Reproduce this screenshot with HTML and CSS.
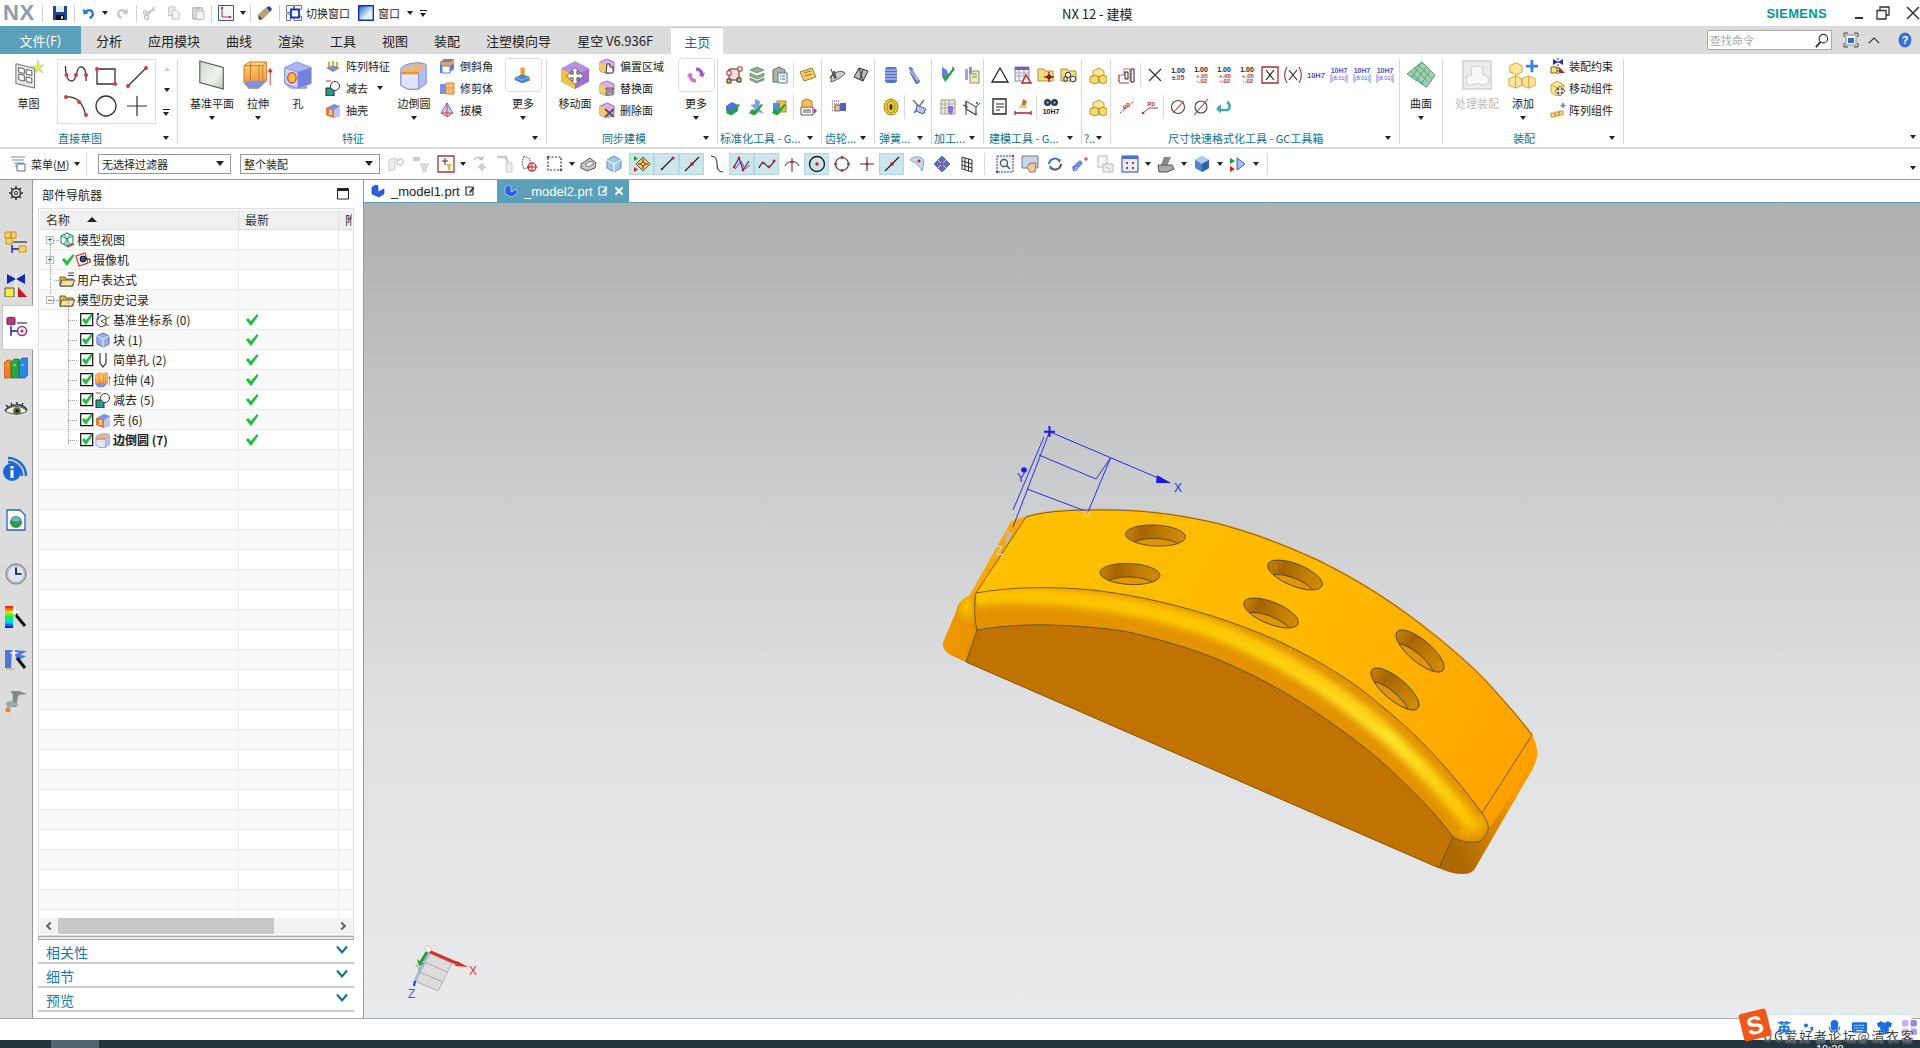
FILE: index.html
```html
<!DOCTYPE html>
<html lang="zh-CN">
<head>
<meta charset="utf-8">
<title>NX 12 - 建模</title>
<link rel="stylesheet" href="styles.css">
</head>
<body>
<svg class="sprite" xmlns="http://www.w3.org/2000/svg">
<defs>
<linearGradient id="gOr" x1="0" y1="0" x2="0" y2="1"><stop offset="0" stop-color="#ffd77a"/><stop offset="1" stop-color="#e88a2a"/></linearGradient>
<linearGradient id="gBl" x1="0" y1="0" x2="1" y2="1"><stop offset="0" stop-color="#dfe6ff"/><stop offset="1" stop-color="#6f80d8"/></linearGradient>
<linearGradient id="gWin" x1="0" y1="0" x2="1" y2="1"><stop offset="0" stop-color="#1a5fb0"/><stop offset=".6" stop-color="#dfeaf5"/><stop offset="1" stop-color="#fff"/></linearGradient>
<linearGradient id="gPl" x1="0" y1="0" x2="1" y2="1"><stop offset="0" stop-color="#c9d8c9"/><stop offset=".6" stop-color="#eef3ee"/><stop offset="1" stop-color="#b9c9bc"/></linearGradient>
<linearGradient id="gRb" x1="0" y1="0" x2="0" y2="1"><stop offset="0" stop-color="#f00"/><stop offset=".25" stop-color="#fc0"/><stop offset=".5" stop-color="#0f4"/><stop offset=".75" stop-color="#0cf"/><stop offset="1" stop-color="#00c"/></linearGradient>

<symbol id="sv" viewBox="0 0 16 16"><path d="M1 1h14v14H1z" fill="#1c468f"/><path d="M4 1h8v6H4z" fill="#e4ebf6"/><path d="M4 10h8v5H4z" fill="#111"/><path d="M9 11h2v3H9z" fill="#ccc"/></symbol>
<symbol id="un" viewBox="0 0 16 16"><path d="M2 3l1 7 6-2z" fill="#2b74d8"/><path d="M4 8c2-4 8-4 9-1 1 2 0 5-3 7" fill="none" stroke="#2b74d8" stroke-width="2.6"/></symbol>
<symbol id="re" viewBox="0 0 16 16"><path d="M14 3l-1 7-6-2z" fill="#c8c8c8"/><path d="M12 8C10 4 4 4 3 7c-1 2 0 5 3 7" fill="none" stroke="#c8c8c8" stroke-width="2.6"/></symbol>
<symbol id="cut" viewBox="0 0 16 16"><path d="M13 1L5 11M14 4L4 8" stroke="#bbb" stroke-width="1.5" fill="none"/><circle cx="4" cy="13" r="2.4" fill="none" stroke="#bbb" stroke-width="1.4"/><circle cx="2.6" cy="7.5" r="2" fill="none" stroke="#bbb" stroke-width="1.4"/></symbol>
<symbol id="cp" viewBox="0 0 16 16"><path d="M2 1h7v10H2z" fill="#eee" stroke="#bbb"/><path d="M6 5h5l3 3v7H6z" fill="#f5f5f5" stroke="#bbb"/></symbol>
<symbol id="pa" viewBox="0 0 16 16"><path d="M2 2h11v13H2z" fill="#ddd" stroke="#aaa"/><path d="M5 1h5v3H5z" fill="#bbb"/><path d="M6 6h9v9H6z" fill="#f5f5f5" stroke="#bbb"/></symbol>
<symbol id="wc" viewBox="0 0 16 16"><path d="M.5 .5h15v15H.5z" fill="#f2f5fb" stroke="#2a5ab0"/><path d="M4 3v9h8" fill="none" stroke="#c03030"/><circle cx="4" cy="3" r="1.2" fill="#d03030"/><circle cx="12" cy="12" r="1.2" fill="#d03030"/></symbol>
<symbol id="br" viewBox="0 0 16 16"><path d="M1 10l7-7 5 4-7 7z" fill="#b8a070"/><path d="M9 3l3-2 3 3-2 3z" fill="#26418a"/><path d="M1 10l5 4-4 1z" fill="#444"/></symbol>
<symbol id="sw" viewBox="0 0 16 16"><path d="M.5 .5h7v7h-7zM8.5 .5h7v4h-7zM.5 9h4v6.5h-4zM8 11h7.5v4.500H8z" fill="#f5f5f5" stroke="#777"/><path d="M5 4.500h8v8H5z" fill="#fff" stroke="#1030d0" stroke-width="1.800"/></symbol>
<symbol id="wn" viewBox="0 0 16 16"><path d="M.7 .7h14.600v14.600H.7z" fill="url(#gWin)" stroke="#0a30c8" stroke-width="1.400"/></symbol>
<symbol id="mx" viewBox="0 0 12 12"><path d="M.5 .5h11v10.500H.5z" fill="#fff" stroke="#222"/><path d="M.5 2h11" stroke="#222" stroke-width="2"/></symbol>

<symbol id="sk" viewBox="0 0 32 32"><path d="M2 4l20 5v21L2 25z" fill="#e8e8e8" stroke="#666"/><path d="M5 8l6 1.500v5l-6-1.500zM13 10l6 1.500v5l-6-1.500zM5 15l6 1.500v6l-6-1.500zM13 18l6 1.500v5l-6-1.500z" fill="#fff" stroke="#555"/><path d="M26 0l1 6 5-1-4 4 3 5-5-3-4 4 1-6-5-2 6-1z" fill="#f6e640" stroke="#7cc7e8" stroke-width=".6"/></symbol>
<symbol id="gs" viewBox="0 0 26 26"><path d="M2.500 2C2.500 11 4 17 9 17C14 17 12.500 5 17 3C22 2 23.500 8 23 17" fill="none" stroke="#333" stroke-width="1.300"/><circle cx="3.500" cy="11" r="2" fill="#d83a3a"/><circle cx="13" cy="11" r="2" fill="#d83a3a"/><circle cx="23" cy="11" r="2" fill="#d83a3a"/></symbol>
<symbol id="gr" viewBox="0 0 26 26"><path d="M4 5h18v15H4z" fill="none" stroke="#333" stroke-width="1.300"/><circle cx="4" cy="5" r="2" fill="#d83a3a"/><circle cx="22" cy="20" r="2" fill="#d83a3a"/></symbol>
<symbol id="gl" viewBox="0 0 26 26"><path d="M4 22L22 4" stroke="#333" stroke-width="1.200"/><circle cx="4" cy="22" r="2" fill="#d83a3a"/><circle cx="22" cy="4" r="2" fill="#d83a3a"/></symbol>
<symbol id="ga" viewBox="0 0 26 26"><path d="M3 4c10-1 17 6 20 19" fill="none" stroke="#333" stroke-width="1.300"/><circle cx="3" cy="4" r="2" fill="#d83a3a"/><circle cx="16" cy="9" r="2" fill="#d83a3a"/><circle cx="23" cy="22" r="2" fill="#d83a3a"/></symbol>
<symbol id="gc" viewBox="0 0 26 26"><circle cx="13" cy="13" r="10" fill="none" stroke="#333" stroke-width="1.300"/></symbol>
<symbol id="gp" viewBox="0 0 26 26"><path d="M13 3v20M3 13h20" stroke="#333" stroke-width="1.200"/></symbol>

<symbol id="dp" viewBox="0 0 32 32"><path d="M3 1l25 7v23L3 24z" fill="url(#gPl)" stroke="#555" stroke-width="1.200"/></symbol>
<symbol id="ex" viewBox="0 0 32 32"><path d="M1 6l6-4h18v20l-8 8H6l-5-6z" fill="url(#gOr)" stroke="#d87030"/><path d="M8 3v21M17 5v24M1 6h20l4-4M21 6v20" fill="none" stroke="#d87030"/><path d="M1 24l5 6h11l8-8H9z" fill="#7f93e0"/><path d="M29 27V10M27 13l2-4 2 4" fill="#d03030" stroke="#d03030"/></symbol>
<symbol id="ho" viewBox="0 0 32 32"><path d="M2 8l13-6 15 6-5 7v15H8l-6-5z" fill="#a9b6ef" stroke="#8593d6"/><path d="M2 8l14 5v17l-14-5z" fill="#cbd4f7" stroke="#8593d6"/><path d="M16 13l14-5v17l-14 5z" fill="#7382dc" stroke="#8593d6"/><ellipse cx="9.500" cy="19" rx="4.500" ry="5.500" fill="#f6c342" stroke="#e0402f" stroke-width="1.400"/></symbol>
<symbol id="eb" viewBox="0 0 32 32"><path d="M2 14V9C6 3 24 1 29 5v20l-8 6H9L2 27z" fill="#b3bff2" stroke="#7888d8"/><path d="M2 14C4 7 16 4 29 5l-8 8H3z" fill="#f4b66a"/><path d="M2 14h19v17H9l-7-4z" fill="#dfe4fb" stroke="#7888d8"/><path d="M2 14h19" stroke="#e9923a" stroke-width="2.400"/></symbol>
<symbol id="mo" viewBox="0 0 24 24"><path d="M9 3h5v9H9z" fill="#f39a2b"/><path d="M2 15l9-4 9 3v5l-9 3-9-4z" fill="#4a87c8"/><path d="M2 15l9 3 9-4" fill="none" stroke="#9fc2e6"/></symbol>
<symbol id="mf" viewBox="0 0 32 32"><path d="M16 1l15 8v14l-15 8-15-8V9z" fill="#b98fe0"/><path d="M1 9l15 8v14L1 23z" fill="#f3c13f"/><path d="M16 17l15-8v14l-15 8z" fill="#a06fd0"/><path d="M16 8l4 4h-2v3h3v-2l4 4-4 4v-2h-3v3h2l-4 4-4-4h2v-3h-3v2l-4-4 4-4v2h3v-3h-2z" fill="#fff" stroke="#555"/></symbol>
<symbol id="rf" viewBox="0 0 24 24"><path d="M12 3a9 9 0 019 7l2-1-3 6-5-3 2-1a5 5 0 00-5-4z" fill="#a35cd0"/><path d="M12 21a9 9 0 01-9-7l-2 1 3-6 5 3-2 1a5 5 0 005 4z" fill="#d070d8"/></symbol>
<symbol id="sf" viewBox="0 0 32 32"><path d="M1 15L17 2l14 14-9 13z" fill="#9fd0b0" stroke="#58956e"/><path d="M5 12l14 15M9 8l14 15M13 5l14 15M17 2L6 19M22 7L10 23M26 11L16 26" stroke="#58956e" fill="none" stroke-width=".9"/></symbol>
<symbol id="pr" viewBox="0 0 32 32"><path d="M1 1h30v30H1z" fill="#ececec" stroke="#d0d0d0" stroke-width="1.500"/><path d="M10 8l6-2 6 2v8l6 2v7l-6 2-6-2-6 2-5-2v-7l5-2z" fill="#f8f8f8" stroke="#ccc"/></symbol>
<symbol id="ad" viewBox="0 0 32 32"><path d="M2 6l7-3 6 3v7l-6 3-7-3z" fill="#fbe69a" stroke="#d8a038"/><path d="M1 20l7-3 7 3v7l-7 3-7-3zM15 20l7-3 7 3v7l-7 3-7-3z" fill="#fbe69a" stroke="#d8a038"/><path d="M8 17v13M22 17v13" stroke="#d8a038"/><path d="M24 0h3v5h5v3h-5v5h-3V8h-5V5h5z" fill="#3a80e8"/></symbol>

<symbol id="pt" viewBox="0 0 16 16"><path d="M1 10l7-3 7 3-7 4z" fill="#7f90c8"/><path d="M3 9h2V4H3zM7 8h2V3H7zM11 9h2V4h-2z" fill="#f0a030"/></symbol>
<symbol id="su" viewBox="0 0 16 16"><path d="M1 1h5" stroke="#d03030"/><path d="M1 8h8v8H1z" fill="#2a9a8e" stroke="#222"/><circle cx="10" cy="6" r="4.500" fill="#fff" stroke="#333"/></symbol>
<symbol id="sh" viewBox="0 0 16 16"><path d="M1 6l8-4 6 2v10l-6 2-8-3z" fill="#7f90d8"/><path d="M1 6l8 2v8l-8-3z" fill="#e87a30"/><path d="M9 8l6-4v10l-6 2z" fill="#bcc6f0"/><path d="M4 8h3v5H4z" fill="#f8d080"/></symbol>
<symbol id="cf" viewBox="0 0 16 16"><path d="M1 4l4-3h10v10l-5 4H1z" fill="#5f7fdc"/><path d="M1 4h10l4-3v4l-4 3H3z" fill="#f0a050"/><path d="M3 8h8v7H3z" fill="#fff" stroke="#5f7fdc"/></symbol>
<symbol id="tr" viewBox="0 0 16 16"><path d="M1 4h6v10H1z" fill="#7f90e0"/><path d="M7 3h8v11H7z" fill="#fbd080" stroke="#e87a30"/><path d="M10 3v11M13 3v11M7 8h8" stroke="#e87a30" stroke-width=".6"/></symbol>
<symbol id="dr" viewBox="0 0 16 16"><path d="M8 1l6 10-6 4-6-4z" fill="#c4ccf5" stroke="#5e78d0"/><path d="M8 1v14M2 11l12 0" stroke="#e0402f"/></symbol>
<symbol id="ofs" viewBox="0 0 16 16"><path d="M8 1l7 3v9l-7 3-7-3V4z" fill="#d9b0e8" stroke="#a070c0"/><path d="M1 4l7 3v9l-7-3z" fill="#f3c86f"/><path d="M8 6h3v3h3v6H7z" fill="#fff" stroke="#333"/></symbol>
<symbol id="rp" viewBox="0 0 16 16"><path d="M8 1l7 3v9l-7 3-7-3V4z" fill="#d9b0e8" stroke="#a070c0"/><path d="M1 4l7 3v9l-7-3z" fill="#f3c86f"/><path d="M7 8h7v2H7zM7 12h7v3H7z" fill="#bbb" stroke="#333" stroke-width=".7"/></symbol>
<symbol id="de" viewBox="0 0 16 16"><path d="M8 1l7 3v9l-7 3-7-3V4z" fill="#d9b0e8" stroke="#a070c0"/><path d="M1 4l7 3v9l-7-3z" fill="#f3c86f"/><path d="M6 7l9 8M15 7l-9 8" stroke="#555" stroke-width="1.800"/></symbol>
<symbol id="co" viewBox="0 0 16 16"><path d="M8 0v16" stroke="#333" stroke-dasharray="2 1"/><path d="M3 1l5 3-5 3zM13 1L8 4l5 3z" fill="#2828c0"/><path d="M1 9h6v6H1z" fill="#f4e46a" stroke="#7a6020"/><path d="M9 9l6 6H9z" fill="#c02020"/></symbol>
<symbol id="mc" viewBox="0 0 16 16"><path d="M7 1l7 4v7l-7 4-6-4V5z" fill="#fbe69a" stroke="#d8a038"/><path d="M1 5l6 3v8M7 8l7-3" stroke="#d8a038" fill="none"/><path d="M10 6l2.500 2.500H11V10h1.500V9L15 11l-2.500 2.500V12H11v1.500h1L10 16l-2-2.500h1V12H7.500v1L5 11l2.500-2.500V10H9V8.500H7.500z" fill="#fff" stroke="#333" stroke-width=".7"/></symbol>
<symbol id="ac" viewBox="0 0 16 16"><path d="M1 11h4v4H1zM5 10h4v4H5zM9 9h4v4H9z" fill="#fbd98a" stroke="#c89038"/><path d="M13 1v5M10.500 3.500h5" stroke="#3a80e8" stroke-width="1.400"/></symbol>

<symbol id="t1" viewBox="0 0 18 18"><path d="M4 3h10v11H4z" fill="#f5dcdc" stroke="#333"/><path d="M2 5h4v4H2zM13 1h4v4h-4z" fill="#fff" stroke="#d02020"/><path d="M2 13h4v4H2zM12 12h4v4h-4z" fill="#f4b040" stroke="#333"/></symbol>
<symbol id="t2" viewBox="0 0 18 18"><path d="M9 1l7 3-7 3-7-3zM2 7l7 3 7-3v3l-7 3-7-3zM2 12l7 3 7-3v2l-7 3-7-3z" fill="#8fb08f" stroke="#557055" stroke-width=".6"/></symbol>
<symbol id="t3" viewBox="0 0 18 18"><path d="M2 4l6-3 6 3v12H2z" fill="#a8b8a8" stroke="#607060"/><path d="M7 7h9v10H7z" fill="#f4f8ff" stroke="#607090"/><path d="M9 10h1M9 13h1M11 10h3M11 13h3" stroke="#3060b0"/></symbol>
<symbol id="t4" viewBox="0 0 18 18"><path d="M1 6l12-4 4 9-12 4z" fill="#f4cf70" stroke="#a07820"/><path d="M5 7l7-2M6 10l7-2" stroke="#a07820"/></symbol>
<symbol id="t5" viewBox="0 0 18 18"><path d="M1 8l6-4 6 3v6l-6 4-6-4z" fill="#4f70e0"/><path d="M1 15l4 2 2 0 8-10-2-1-6 7-3-2z" fill="#20a830"/></symbol>
<symbol id="t6" viewBox="0 0 18 18"><path d="M7 1l5 2-1 7 5 6-5-2-4 3-1-7-4-3 5-1z" fill="#7fa0e8"/><path d="M1 15l4 2 2 0 8-10-2-1-6 7-3-2z" fill="#20a830"/></symbol>
<symbol id="t7" viewBox="0 0 18 18"><path d="M6 3h9v11H6z" fill="#f0c040" stroke="#b08020"/><path d="M2 5h7v10H2z" fill="#4f8de0"/><path d="M1 15l4 2 2 0 8-10-2-1-6 7-3-2z" fill="#20a830"/></symbol>
<symbol id="t8" viewBox="0 0 18 18"><path d="M2 9h12v8H2z" fill="#fff" stroke="#555"/><path d="M4 12h8M4 14h8" stroke="#555"/><path d="M3 3l5-2 5 2v6H3z" fill="#f0c060" stroke="#b08020"/><path d="M15 10l3 3-3 3z" fill="#b030b0"/></symbol>
<symbol id="t9" viewBox="0 0 18 18"><path d="M2 10c4-3 9-7 14-3-3 5-9 7-14 9z" fill="#ccc" stroke="#555"/><path d="M2 3l4 10" stroke="#333"/><text x="1" y="12" font-size="11" font-style="italic" font-family="Liberation Serif" fill="#333">A</text></symbol>
<symbol id="t10" viewBox="0 0 18 18"><path d="M2 11l5-9 9 3-5 10z" fill="#bbb" stroke="#333"/><path d="M7 2l4 13M11 3l-3 10" stroke="#333"/></symbol>
<symbol id="t11" viewBox="0 0 18 18"><path d="M3 3h8M3 6h8M3 9h8M3 12h8" stroke="#333" stroke-dasharray="1 1"/><path d="M6 7h5v6H6z" fill="#f0c0a0" stroke="#a06040"/><path d="M11 5h6v8h-6z" fill="#5060c0"/></symbol>
<symbol id="t12" viewBox="0 0 18 18"><rect x="3" y="1" width="12" height="16" rx="3" fill="#5a6fc8"/><path d="M3 4h12M3 7h12M3 10h12M3 13h12" stroke="#cfd8f5" stroke-width="1"/></symbol>
<symbol id="t13" viewBox="0 0 18 18"><path d="M4 2c2-1 4 1 4 3l6 9c1 2-1 4-3 3L5 6" fill="#6f88d8" stroke="#3a50a0"/><path d="M5 5l8 10M7 4l7 10" stroke="#cfd8f5"/></symbol>
<symbol id="t14" viewBox="0 0 18 18"><ellipse cx="9" cy="9" rx="7" ry="8" fill="#eecb30" stroke="#a08820"/><ellipse cx="9" cy="9" rx="4" ry="6" fill="none" stroke="#a08820"/><ellipse cx="9" cy="9" rx="1.500" ry="3" fill="#333"/></symbol>
<symbol id="t15" viewBox="0 0 18 18"><path d="M3 2l12 13M14 2L4 15" stroke="#777" stroke-width="1.500"/><path d="M7 7l9 4-3 5-7-3z" fill="#b8c8ee" stroke="#4060b0"/></symbol>
<symbol id="t16" viewBox="0 0 18 18"><path d="M3 1l5 3 2 7-4 5-3-6zM13 1l2 0-1 4z" fill="#6a7ce0"/><path d="M4 12l3 3 9-12-2-1-7 9-2-2z" fill="#20a830"/></symbol>
<symbol id="t17" viewBox="0 0 18 18"><path d="M3 3h3v11H3z" fill="#9aa4e8"/><path d="M8 5h9v12H8z" fill="#f2e9b8" stroke="#888"/><path d="M10 8h5M10 11h5" stroke="#4a7"/><path d="M7 1h3v7H7z" fill="#8890d8"/></symbol>
<symbol id="t18" viewBox="0 0 18 18"><path d="M2 2h14v14H2z" fill="#f0ecc8" stroke="#999"/><path d="M2 6h14M2 10h14M6 2v14M10 2v14" stroke="#aaa"/><path d="M9 8h5v6l-2 3-3-3z" fill="#9070d8"/></symbol>
<symbol id="t19" viewBox="0 0 18 18"><path d="M4 3l10 6v8L4 11z" fill="#eee" stroke="#444"/><path d="M4 3v14M1 7l5 2M14 9l4-4M4 11l10 6" stroke="#444" fill="none"/><circle cx="15" cy="5" r="1.200" fill="#30a030"/><circle cx="14" cy="16" r="1.200" fill="#d03030"/></symbol>
<symbol id="t20" viewBox="0 0 18 18"><path d="M9 2l8 14H1z" fill="#fff" stroke="#222" stroke-width="1.300"/></symbol>
<symbol id="t21" viewBox="0 0 18 18"><path d="M1 1h14v14H1z" fill="#eeeef8" stroke="#888"/><path d="M1 1h14v3H1z" fill="#7060c0"/><path d="M1 7h14M1 10h14M5 4v11M10 4v11" stroke="#aab"/><path d="M12 9l5 8H8z" fill="#f8f8f8" stroke="#c02020" stroke-width="1.400"/></symbol>
<symbol id="t22" viewBox="0 0 18 18"><path d="M1 3h6l1 2h8v10H1z" fill="#f4dd80" stroke="#a89030"/><path d="M12 6v10M7 11h10" stroke="#d01010" stroke-width="1.400"/><circle cx="12" cy="11" r="1.800" fill="none" stroke="#111"/></symbol>
<symbol id="t23" viewBox="0 0 18 18"><path d="M1 3h6l1 2h8v10H1z" fill="#f4dd80" stroke="#a89030"/><circle cx="8" cy="9" r="2.600" fill="#fff" stroke="#333"/><circle cx="13" cy="13" r="2.800" fill="#fff" stroke="#333"/><path d="M4 11h3v4H4z" fill="#fff" stroke="#333"/></symbol>
<symbol id="t24" viewBox="0 0 18 18"><path d="M2 1h13v15H2z" fill="#fff" stroke="#222" stroke-width="1.300"/><path d="M5 6h8M5 9h8M5 12h4" stroke="#222"/></symbol>
<symbol id="t25" viewBox="0 0 18 18"><path d="M9 1l4 2-2 6H7z" fill="#b08040"/><path d="M6 7h6l1 3H5z" fill="#f4d040"/><path d="M1 13v4M17 13v4M1 15h16" stroke="#c02020" stroke-width="1.300"/></symbol>
<symbol id="t26" viewBox="0 0 18 18"><circle cx="5.500" cy="4.500" r="3.500" fill="#2a3a4a"/><circle cx="12.500" cy="4.500" r="3.500" fill="#2a3a4a"/><circle cx="5.500" cy="4.500" r="1.200" fill="#8ab"/><circle cx="12.500" cy="4.500" r="1.200" fill="#8ab"/><text x="9" y="16" text-anchor="middle" font-size="7" font-weight="700" font-family="Liberation Sans" fill="#222">10H7</text></symbol>
<symbol id="t27" viewBox="0 0 18 18"><path d="M4 5l6-3 5 3v6l-5 3-6-3z" fill="#fbe69a" stroke="#c89a30"/><path d="M1 11l5-2 4 2v5l-4 2-5-2zM9 11l5-2 4 2v5l-4 2-4-2z" fill="#fbd86a" stroke="#b08820"/></symbol>
<symbol id="d1" viewBox="0 0 18 18"><path d="M1 16V9h5V3h6v13M1 9v7" fill="none" stroke="#c03030" stroke-dasharray="2 .8"/><path d="M7 6h3v7H7zM13 3v13M16 3v13M13 3h3M13 16h3" stroke="#222" fill="none"/><path d="M1 17h10" stroke="#c03030"/></symbol>
<symbol id="d2" viewBox="0 0 18 18"><path d="M3 3l12 12M15 3L3 15" stroke="#333" stroke-width="1.200"/></symbol>
<symbol id="d3" viewBox="0 0 18 18"><text x="9" y="7" text-anchor="middle" font-size="7" font-weight="700" font-family="Liberation Sans" fill="#222">1.00</text><text x="9" y="14" text-anchor="middle" font-size="6.500" font-weight="700" font-family="Liberation Sans" fill="#c03030">±.05</text></symbol>
<symbol id="d4" viewBox="0 0 18 18"><text x="9" y="6" text-anchor="middle" font-size="7" font-weight="700" font-family="Liberation Sans" fill="#222">1.00</text><text x="10" y="12" text-anchor="middle" font-size="6" font-weight="700" font-family="Liberation Sans" fill="#c03030">+.05</text><text x="10" y="17" text-anchor="middle" font-size="6" font-weight="700" font-family="Liberation Sans" fill="#c03030">-.02</text></symbol>
<symbol id="d5" viewBox="0 0 18 18"><path d="M1 1h16v16H1z" fill="#fff" stroke="#a03030" stroke-width="1.300"/><path d="M5 4l8 10M13 4L5 14" stroke="#222" stroke-width="1.100"/></symbol>
<symbol id="d6" viewBox="0 0 18 18"><path d="M3 1C0 6 0 12 3 17M15 1c3 5 3 11 0 16" fill="none" stroke="#a03030" stroke-width="1.100"/><path d="M5 4l8 10M13 4L5 14" stroke="#222" stroke-width="1.100"/></symbol>
<symbol id="d7" viewBox="0 0 18 18"><text x="9" y="12" text-anchor="middle" font-size="7.500" font-weight="700" font-family="Liberation Sans" fill="#5050d0">10H7</text></symbol>
<symbol id="d8" viewBox="0 0 18 18"><text x="9" y="7" text-anchor="middle" font-size="7" font-weight="700" font-family="Liberation Sans" fill="#5050d0">10H7</text><text x="9" y="14" text-anchor="middle" font-size="5.500" font-family="Liberation Sans" fill="#5050d0">[8.01]</text><path d="M1 8v9M17 8v9" stroke="#5050d0" stroke-width=".7"/></symbol>
<symbol id="d9" viewBox="0 0 18 18"><path d="M2 15L16 3" stroke="#c03030" stroke-dasharray="2 1"/><text x="9" y="10" text-anchor="middle" font-size="6" font-style="italic" font-weight="700" font-family="Liberation Sans" fill="#c03030" transform="rotate(-38 9 9)">R0</text></symbol>
<symbol id="d10" viewBox="0 0 18 18"><path d="M1 16l7-6h9" stroke="#c03030" fill="none"/><circle cx="2" cy="15" r="1.300" fill="#c03030"/><text x="10" y="8" text-anchor="middle" font-size="6" font-weight="700" font-family="Liberation Sans" fill="#c03030">R0</text></symbol>
<symbol id="d11" viewBox="0 0 18 18"><circle cx="9" cy="9" r="6.500" fill="#fff" stroke="#444" stroke-width="1.100"/><path d="M4 15L15 3" stroke="#c03030" stroke-width="1.100"/></symbol>
<symbol id="d12" viewBox="0 0 18 18"><circle cx="9" cy="9" r="6" fill="#fff" stroke="#444" stroke-width="1.100"/><path d="M2 17L16 1" stroke="#c03030" stroke-width="1.100"/></symbol>
<symbol id="d13" viewBox="0 0 18 18"><path d="M4 8v4h8c3 0 4-6 0-8" fill="none" stroke="#4aa8a8" stroke-width="2.600"/><path d="M1 11l5-5v9z" fill="#4aa8a8"/></symbol>

<symbol id="mn" viewBox="0 0 16 16"><path d="M1 1h14M2 4h12M4 7h10M5 10h9" stroke="#6688a8"/><path d="M7 8h8v7H7z" fill="#fff" stroke="#666"/></symbol>
<symbol id="a1" viewBox="0 0 18 18"><path d="M2 5l6-2v11l-6 2zM8 3l5 3" fill="#eee" stroke="#ccc"/><circle cx="13" cy="7" r="3" fill="none" stroke="#ccc" stroke-width="1.500"/></symbol>
<symbol id="a2" viewBox="0 0 18 18"><path d="M1 2h7v4H1z" fill="#ccc"/><path d="M8 9h9l-3 4v4h-3v-4z" fill="#ddd" stroke="#ccc"/></symbol>
<symbol id="a3" viewBox="0 0 18 18"><path d="M1 1h16v16H1z" fill="#fff" stroke="#b83030" stroke-width="1.300"/><path d="M8 3v7M5 6h6" stroke="#333"/><path d="M9 9h6l-2 3v3h-2v-3z" fill="#f0b030"/></symbol>
<symbol id="a4" viewBox="0 0 18 18"><path d="M3 5c2-4 7-3 8 0M11 5l-2-1 3-2z" fill="none" stroke="#bbb" stroke-width="1.200"/><path d="M11 8v9M7 12h8" stroke="#bbb"/><circle cx="11" cy="12" r="2.400" fill="none" stroke="#bbb"/></symbol>
<symbol id="a5" viewBox="0 0 18 18"><path d="M1 2h9l2 6" fill="none" stroke="#ccc" stroke-width="2.400"/><path d="M10 8h6v9h-6z" fill="#eee" stroke="#ccc"/></symbol>
<symbol id="a6" viewBox="0 0 18 18"><path d="M3 1l6 3v8l-6 2-2-6z" fill="none" stroke="#444" stroke-dasharray="1.500 1"/><circle cx="11" cy="12" r="4" fill="none" stroke="#c02020" stroke-width="1.200"/><path d="M11 7v10M6 12h10" stroke="#c02020"/></symbol>
<symbol id="a7" viewBox="0 0 18 18"><path d="M2 2h13v13H2z" fill="none" stroke="#333" stroke-dasharray="2 1.500" stroke-width="1.200"/><circle cx="2" cy="2" r="1.300" fill="#c03030"/><circle cx="15" cy="15" r="1.300" fill="#c03030"/></symbol>
<symbol id="a8" viewBox="0 0 18 18"><path d="M1 9l9-6 6 5-1 5-8 3-6-3z" fill="#c9c9c9" stroke="#555"/><path d="M5 9l6-3 3 3-6 3z" fill="#eee" stroke="#777"/></symbol>
<symbol id="a9" viewBox="0 0 18 18"><path d="M2 5l7-4 7 4v8l-7 4-7-4z" fill="#9fc8ea" stroke="#6090c0"/><path d="M2 5l7 4 7-4M9 9v8" fill="none" stroke="#fff"/></symbol>
<symbol id="a11" viewBox="0 0 18 18"><path d="M10 2l7 7-7 7-7-7z" fill="#f4cf50" stroke="#555"/><path d="M10 4v10M5 9h10" stroke="#333"/><circle cx="10" cy="9" r="1.800" fill="#fff" stroke="#c02020"/><path d="M1 1l4 2.500-4 2.500z" fill="#18a028"/><path d="M1 12l4 2.500-4 2.500z" fill="#e02020"/></symbol>
<symbol id="a12" viewBox="0 0 18 18"><path d="M3 15L15 3" stroke="#222" stroke-width="1.200"/><circle cx="15" cy="3" r="1.500" fill="#d02020"/><circle cx="4" cy="14" r="1" fill="#222"/></symbol>
<symbol id="a13" viewBox="0 0 18 18"><path d="M2 16L16 2" stroke="#222" stroke-width="1.200"/><circle cx="9" cy="9" r="1.800" fill="#d02020"/></symbol>
<symbol id="a14" viewBox="0 0 18 18"><path d="M3 1c5 0 6 3 6 8s1 8 6 8" fill="none" stroke="#333" stroke-width="1.200"/></symbol>
<symbol id="a15" viewBox="0 0 18 18"><path d="M1 12L6 3l4 12 6-9" fill="none" stroke="#30307a" stroke-width="1.200"/><path d="M2 14L8 6l4 8 5-4" fill="none" stroke="#c02080"/><circle cx="6" cy="3" r="1.400" fill="#d02020"/><circle cx="10" cy="15" r="1.400" fill="#d02020"/><circle cx="1" cy="12" r="1.400" fill="#d02020"/></symbol>
<symbol id="a16" viewBox="0 0 18 18"><path d="M1 13c3-7 5-6 7-3s4 3 9-5" fill="none" stroke="#222" stroke-width="1.200"/><circle cx="5" cy="8" r="1.400" fill="#d02020"/><circle cx="11" cy="12" r="1.400" fill="#d02020"/><circle cx="16" cy="6" r="1.400" fill="#d02020"/></symbol>
<symbol id="a17" viewBox="0 0 18 18"><path d="M2 11c2-6 12-6 14 0M9 3v14" fill="none" stroke="#333"/><circle cx="9" cy="7" r="1.500" fill="#d02020"/></symbol>
<symbol id="a18" viewBox="0 0 18 18"><circle cx="9" cy="9" r="7.500" fill="none" stroke="#222" stroke-width="1.400"/><circle cx="9" cy="9" r="1.800" fill="#d02020"/></symbol>
<symbol id="a19" viewBox="0 0 18 18"><circle cx="9" cy="9" r="6.500" fill="none" stroke="#444" stroke-width="1.200"/><circle cx="9" cy="2.500" r="1.400" fill="#d02020"/><circle cx="9" cy="15.500" r="1.400" fill="#d02020"/><circle cx="2.500" cy="9" r="1.400" fill="#d02020"/><circle cx="15.500" cy="9" r="1.400" fill="#d02020"/></symbol>
<symbol id="a20" viewBox="0 0 18 18"><path d="M9 2v14M2 9h14" stroke="#333" stroke-width="1.100"/><circle cx="9" cy="9" r="1.600" fill="#d02020"/></symbol>
<symbol id="a21" viewBox="0 0 18 18"><path d="M2 5c4-5 12-4 14 1l-2 10C11 9 6 7 2 5z" fill="#bfdaf0" stroke="#7fa4c8"/><circle cx="11" cy="6" r="1.500" fill="#d02020"/></symbol>
<symbol id="a22" viewBox="0 0 18 18"><path d="M9 1l8 8-8 8-8-8z" fill="#5c6cc8" stroke="#777"/><path d="M5 5l8 8M13 5l-8 8" stroke="#cdd"/><circle cx="9" cy="9" r="1.500" fill="#e04040"/></symbol>
<symbol id="a23" viewBox="0 0 18 18"><path d="M4 2l10 3v12L4 14z" fill="#f3f3f3" stroke="#333"/><path d="M7 3v12M10.500 4v12M4 6l10 3M4 10l10 3" stroke="#333"/></symbol>
<symbol id="b1" viewBox="0 0 18 18"><path d="M1 1h16v16H1z" fill="#f0f4fb" stroke="#2040b0" stroke-dasharray="2 1"/><circle cx="8" cy="8" r="3.500" fill="none" stroke="#555" stroke-width="1.300"/><path d="M10.500 10.500L14 14" stroke="#555" stroke-width="1.500"/><circle cx="1" cy="17" r="1.200" fill="#d02020"/><circle cx="17" cy="1" r="1.200" fill="#d02020"/></symbol>
<symbol id="b2" viewBox="0 0 18 18"><path d="M1 1h16v12H1z" fill="#c8d8ea" stroke="#778"/><path d="M9 8h6l-1 9H9L6 12z" fill="#f2c8a0" stroke="#a07050"/></symbol>
<symbol id="b3" viewBox="0 0 18 18"><path d="M3 9a6 6 0 0110-4" fill="none" stroke="#3a78c8" stroke-width="2"/><path d="M15 9a6 6 0 01-10 4" fill="none" stroke="#555" stroke-width="2"/><path d="M11 5l4-1-1 4zM7 13l-4 1 1-4z" fill="#3a78c8"/></symbol>
<symbol id="b4" viewBox="0 0 18 18"><path d="M1 12l8-7 3 3-7 8H2z" fill="#6c8ae0"/><path d="M4 15l2-3" stroke="#cdf"/><path d="M15 2v4M13 4h4" stroke="#d03030"/></symbol>
<symbol id="b5" viewBox="0 0 18 18"><path d="M2 1h9v11H2z" fill="#f4f4f4" stroke="#bbb"/><path d="M7 9h10v8H7z" fill="#eee" stroke="#bbb"/><path d="M9 11l6 4" stroke="#bbb"/></symbol>
<symbol id="b6" viewBox="0 0 18 18"><path d="M1 1h16v16H1z" fill="#e8eefc" stroke="#2040b0"/><path d="M1 1h16v3H1z" fill="#5070d0"/><path d="M5 7h2v2H5zM11 7h2v2h-2zM5 12h2v2H5zM11 12h2v2h-2z" fill="#d03030"/></symbol>
<symbol id="b7" viewBox="0 0 18 18"><path d="M4 10l3-8h7l-4 9z" fill="#888"/><path d="M1 10h14l2 4-7 3H2z" fill="#aaa" stroke="#555"/></symbol>
<symbol id="b8" viewBox="0 0 18 18"><path d="M2 5l7-4 7 4v8l-7 4-7-4z" fill="#4f88d0"/><path d="M2 5l7-4 7 4-7 4z" fill="#aacff0"/><path d="M9 9v8l7-4V5z" fill="#3060a8"/></symbol>
<symbol id="b9" viewBox="0 0 18 18"><path d="M8 3l8 6-8 6z" fill="#a8c0f0" stroke="#4060b0"/><path d="M1 3l5 3-5 3z" fill="#18a028"/><path d="M1 11l5 3-5 3z" fill="#e02020"/></symbol>

<symbol id="cog" viewBox="0 0 16 16"><circle cx="8" cy="8" r="4.500" fill="none" stroke="#333" stroke-width="1.500"/><circle cx="8" cy="8" r="1.600" fill="none" stroke="#333"/><path d="M8 1v2.500M8 12.500V15M1 8h2.500M12.500 8H15M3 3l1.800 1.800M11.200 11.200L13 13M13 3l-1.800 1.800M3 13l1.800-1.800" stroke="#333" stroke-width="1.600"/></symbol>
<symbol id="r2" viewBox="0 0 24 24"><path d="M1 1h6v6H1zM7 1h5v6H7zM2 7h6v6H2z" fill="#f9d860" stroke="#c89020"/><path d="M9 11h14" stroke="#111"/><path d="M8 14v8M8 18h8" stroke="#1a1ab0" stroke-width="1.400"/><path d="M15 15h7v6h-7z" fill="#f9d860" stroke="#c89020"/></symbol>
<symbol id="r3" viewBox="0 0 24 24"><path d="M3 1l9 5 9-5v10l-9-5-9 5z" fill="#1428b8"/><path d="M12 0v24" stroke="#fff" stroke-dasharray="2 1"/><path d="M1 15h9v9H1z" fill="#f8ec40" stroke="#555"/><path d="M14 14l9 10h-9z" fill="#c81818"/></symbol>
<symbol id="r4" viewBox="0 0 24 24"><path d="M1 3c0-1 8-1 8 0v6c0 1-8 1-8 0z" fill="#b03a80" stroke="#702050"/><path d="M11 8h10" stroke="#111"/><path d="M5 11v10M5 16h6" stroke="#1a1ab0" stroke-width="1.400"/><circle cx="16" cy="16" r="4.500" fill="none" stroke="#a03080" stroke-width="1.500"/><circle cx="16" cy="16" r="1.600" fill="#a03080"/></symbol>
<symbol id="r5" viewBox="0 0 24 24"><path d="M0 6l3-3h4v18H0z" fill="#f08020" stroke="#a85010" stroke-width=".6"/><path d="M7 5l3-3h5v19H7z" fill="#28a840" stroke="#107020" stroke-width=".6"/><path d="M15 4l3-3h6v17l-3 3h-6z" fill="#2888e0" stroke="#1050a0" stroke-width=".6"/><path d="M2 8h3M9 8h3M17 8h3" stroke="#fff" stroke-width=".7"/></symbol>
<symbol id="r6" viewBox="0 0 24 24"><path d="M1 12c5-6 17-6 22 0-5 4-17 4-22 0z" fill="#eee" stroke="#555"/><circle cx="13" cy="12" r="3.800" fill="#56702c"/><circle cx="13" cy="12" r="1.500" fill="#111"/><path d="M1 12C6 4 18 4 23 11M4 8L2 6M8 6L7 4M13 5V3M18 6l1-2" fill="none" stroke="#333" stroke-width="1.500"/></symbol>
<symbol id="r7" viewBox="0 0 28 28"><path d="M6 4a18 18 0 0118 18M6 8a14 14 0 0114 14" fill="none" stroke="#2670d0" stroke-width="2.600"/><circle cx="10" cy="18" r="9" fill="#1a68d8"/><path d="M8.500 16h3v8h-3zM8.500 12h3v2.500h-3z" fill="#fff"/></symbol>
<symbol id="r8" viewBox="0 0 24 24"><path d="M3 2h13l5 5v15H3z" fill="#fff" stroke="#2a62c8" stroke-width="1.300"/><circle cx="12" cy="14" r="6" fill="#2f9a48"/><path d="M7 12c3-4 8-4 10 0-3 2-7 2-10 0z" fill="#6ab0e8"/></symbol>
<symbol id="r9" viewBox="0 0 26 24"><circle cx="13" cy="12" r="11" fill="#bbb" stroke="#777"/><circle cx="13" cy="12" r="8.500" fill="#d8e8fa"/><path d="M13 5v7h6" fill="none" stroke="#111" stroke-width="1.800"/></symbol>
<symbol id="r10" viewBox="0 0 24 24"><path d="M1 1h8v22H1z" fill="url(#gRb)"/><path d="M11 9l10 12" stroke="#111" stroke-width="3"/><path d="M11 1l1 5 5 1-5 1-1 5-1-5-5-1 5-1z" fill="#fff"/></symbol>
<symbol id="r11" viewBox="0 0 24 24"><path d="M1 3h7l-1 18H1zM8 3l15 1-7 4 6 1-8 5z" fill="#4a7ad8"/><path d="M2 22h8" stroke="#c8a020"/><path d="M13 11l8 10" stroke="#111" stroke-width="3"/><path d="M10 1l1 4 4 1-4 1-1 4-1-4-4-1 4-1z" fill="#fff"/></symbol>
<symbol id="r12" viewBox="0 0 24 24"><path d="M7 2h8l8 3-8 1-1 2-2 10H8l1-11z" fill="#888"/><path d="M2 14c3-3 8-2 12 1l-1 3-4-1-3 2-3-1z" fill="#9aa"/><circle cx="4" cy="21" r="2.500" fill="#f08020"/></symbol>

<symbol id="ck" viewBox="0 0 14 14"><path d="M1 7l2-2 3 3 6-7 1.500 1.500L6 13z" fill="#1cc03a"/></symbol>
<symbol id="cb" viewBox="0 0 14 14"><path d="M.7 .7h12v12H.7z" fill="#fff" stroke="#111" stroke-width="1.200"/><path d="M2 7l2-2 2 2 5-6 1.500 1.500L6 12z" fill="#1cc03a"/></symbol>
<symbol id="n1" viewBox="0 0 16 16"><path d="M8 1l6 3v7l-6 3-6-3V4z" fill="#fff" stroke="#1a9a70" stroke-width="1.200"/><path d="M2 4l6 3 6-3M8 7v7M5 2.500L11 12M11 2.500L5 12" stroke="#1a9a70" fill="none"/><path d="M8 15l7-3" stroke="#e04020" stroke-width="1.500"/></symbol>
<symbol id="n2" viewBox="0 0 16 16"><path d="M1 4l9-3 3 10-9 3z" fill="#fff" stroke="#e03010" stroke-width="1.200"/><circle cx="8" cy="7" r="3" fill="#3050b0" stroke="#111"/><path d="M11 7h4v4" stroke="#111" fill="none"/></symbol>
<symbol id="n3" viewBox="0 0 16 16"><path d="M1 5h5l1 2h7v7H1z" fill="#f6b830" stroke="#555"/><path d="M1 14l2-6h13l-3 6z" fill="#fce090" stroke="#555"/><path d="M9 1h6M9 3.500h6" stroke="#2030b0"/></symbol>
<symbol id="n4" viewBox="0 0 16 16"><path d="M1 4h5l1 2h7v8H1z" fill="#f6b830" stroke="#555"/><path d="M1 14l2-6h13l-3 6z" fill="#fce090" stroke="#555"/></symbol>
<symbol id="n5" viewBox="0 0 16 16"><path d="M2 7l5-4 4 2v8l-5 2-4-3z" fill="#fff" stroke="#333"/><path d="M3 1v7M3 1l-1 2M3 1l1 2" stroke="#2030c0"/><path d="M6 9l9-4" stroke="#18a028"/><path d="M6 9l8 5" stroke="#d02020"/></symbol>
<symbol id="n6" viewBox="0 0 16 16"><path d="M8 1l6 3v8l-6 3-6-3V4z" fill="#9ab0ee" stroke="#6070b8"/><path d="M2 4l6 3 6-3M8 7v8" fill="none" stroke="#e8eeff"/></symbol>
<symbol id="n7" viewBox="0 0 16 16"><path d="M5 1v10l3 4 3-4V1" fill="#fff" stroke="#222" stroke-width="1.100"/></symbol>

<linearGradient id="mTop" gradientUnits="userSpaceOnUse" x1="1020" y1="520" x2="1500" y2="780"><stop offset="0" stop-color="#ffc000"/><stop offset=".6" stop-color="#ffb800"/><stop offset="1" stop-color="#ffa400"/></linearGradient>
<linearGradient id="mHi" gradientUnits="userSpaceOnUse" x1="980" y1="600" x2="1480" y2="800"><stop offset="0" stop-color="#ffc800"/><stop offset=".4" stop-color="#ffd400"/><stop offset=".75" stop-color="#fff238"/><stop offset="1" stop-color="#ffc800"/></linearGradient>
<linearGradient id="mSide" gradientUnits="userSpaceOnUse" x1="1450" y1="840" x2="1520" y2="800"><stop offset="0" stop-color="#ad6800"/><stop offset=".5" stop-color="#d28300"/><stop offset="1" stop-color="#f59e00"/></linearGradient>
<linearGradient id="mLeft" gradientUnits="userSpaceOnUse" x1="945" y1="630" x2="985" y2="640"><stop offset="0" stop-color="#f09a00"/><stop offset="1" stop-color="#e59200"/></linearGradient>
<radialGradient id="mBall" cx=".5" cy=".35" r=".7"><stop offset="0" stop-color="#ffc400"/><stop offset="1" stop-color="#d98800"/></radialGradient>
<linearGradient id="hG"><stop offset="0" stop-color="#c98200"/><stop offset=".28" stop-color="#a56400"/><stop offset=".65" stop-color="#c27c00"/><stop offset="1" stop-color="#d48d00"/></linearGradient>
<clipPath id="hC"><ellipse rx="30" ry="10.500"/></clipPath>
<filter id="blur6"><feGaussianBlur stdDeviation="4"/></filter>
<clipPath id="filletClip"><path d="M977 593C1010 587 1050 586 1093 590C1155 597 1220 615 1277 640C1320 660 1355 682 1379 703C1420 735 1455 775 1483 813L1454 837C1438 815 1420 797 1399 777C1382 760 1362 744 1338 727C1305 703 1272 683 1236 667C1205 652 1170 642 1134 633C1110 628 1080 626 1052 625C1030 624 1000 626 978 630z"/></clipPath>
<symbol id="hole" overflow="visible" viewBox="-32 -12 64 24" width="64" height="24">
<ellipse rx="30" ry="10.500" fill="url(#hG)"/>
<g clip-path="url(#hC)"><ellipse cx="2" cy="13" rx="27" ry="10" fill="#e39500" stroke="#39405a" stroke-width=".8"/></g>
<ellipse rx="30" ry="10.500" fill="none" stroke="#39405a" stroke-width=".8"/>
</symbol>
</defs>
</svg>

<header class="titlebar">
  <div class="qat">
    <span class="nx">NX</span><i class="qsep"></i>
    <svg class="q16 ml10"><use href="#sv"/></svg><i class="qsep"></i>
    <svg class="q14"><use href="#un"/></svg><i class="car mi"></i>
    <svg class="q14 ml4"><use href="#re"/></svg><i class="qsep"></i>
    <svg class="q14"><use href="#cut"/></svg><svg class="q14 ml10"><use href="#cp"/></svg><svg class="q14 ml10"><use href="#pa"/></svg><i class="qsep"></i>
    <svg class="q16"><use href="#wc"/></svg><i class="car mi3"></i><i class="qsep"></i>
    <svg class="q16"><use href="#br"/></svg><i class="qsep"></i>
    <svg class="q16"><use href="#sw"/></svg><span class="qt">切换窗口</span>
    <svg class="q16 ml8"><use href="#wn"/></svg><span class="qt">窗口</span><i class="car mi"></i><i class="more qmore"></i>
  </div>
  <div class="apptitle">NX 12 - 建模</div>
  <div class="winbtns">
    <span class="siemens">SIEMENS</span>
    <svg class="wb wb1" viewBox="0 0 14 14"><path d="M3 12h8" stroke="#333" stroke-width="2"/></svg>
    <svg class="wb wb2" viewBox="0 0 14 14"><path d="M1 4.500h9v8.500H1zM4 4V1h9v8h-3" fill="none" stroke="#333" stroke-width="1.300"/></svg>
    <svg class="wb" viewBox="0 0 14 14"><path d="M1 1l12 12M13 1L1 13" stroke="#333" stroke-width="1.500"/></svg>
  </div>
</header>

<nav class="menubar">
  <a class="filetab">文件(F)</a>
  <a class="mt first">分析</a><a class="mt">应用模块</a><a class="mt">曲线</a><a class="mt">渲染</a><a class="mt">工具</a><a class="mt">视图</a><a class="mt">装配</a><a class="mt">注塑模向导</a><a class="mt star">星空 V6.936F</a><a class="mt cur">主页</a>
  <div class="menuright">
    <div class="search"><span>查找命令</span><svg class="searchic" viewBox="0 0 16 16"><circle cx="10" cy="6" r="4.500" fill="#fff" stroke="#333" stroke-width="1.200"/><path d="M7 9.500L2 15" stroke="#333" stroke-width="2"/></svg></div>
    <svg class="mr1" viewBox="0 0 16 16"><path d="M1 5V1h4M11 1h4v4M15 11v4h-4M5 15H1v-4" fill="none" stroke="#444"/><path d="M3 3h10v10H3z" fill="#fff" stroke="#888"/><path d="M5 6h6v5H5z" fill="#2a6fc8"/></svg>
    <svg class="mr2" viewBox="0 0 14 10"><path d="M1 8l6-6 6 6" fill="none" stroke="#222" stroke-width="1.300"/></svg>
    <svg class="mr3" viewBox="0 0 14 16"><ellipse cx="7" cy="8" rx="6.500" ry="7.500" fill="#3b6fd0"/><text x="7" y="12" text-anchor="middle" font-size="11" font-weight="700" font-family="Liberation Sans" fill="#fff">?</text></svg>
  </div>
</nav>

<section class="ribbon">
  <div class="grp g1">
    <div class="body">
      <div class="bb w57"><span class="bi"><svg class="b30"><use href="#sk"/></svg></span><span class="bl">草图</span></div>
      <div class="gallery">
        <svg class="g26"><use href="#gs"/></svg><svg class="g26"><use href="#gr"/></svg><svg class="g26"><use href="#gl"/></svg>
        <svg class="g26"><use href="#ga"/></svg><svg class="g26"><use href="#gc"/></svg><svg class="g26"><use href="#gp"/></svg>
      </div>
      <div class="gscroll"><i class="tri-up"></i><i class="car"></i><i class="more"></i></div>
    </div>
    <div class="foot"><span>直接草图</span><i class="car"></i></div>
  </div>

  <div class="grp g2">
    <div class="body">
      <div class="bb w50"><span class="bi"><svg class="b30"><use href="#dp"/></svg></span><span class="bl">基准平面</span><i class="car"></i></div>
      <div class="bb w42"><span class="bi"><svg class="b30"><use href="#ex"/></svg></span><span class="bl">拉伸</span><i class="car"></i></div>
      <div class="bb w38"><span class="bi"><svg class="b30"><use href="#ho"/></svg></span><span class="bl">孔</span></div>
      <div class="sc w68 ml6">
        <div class="si"><svg class="s16"><use href="#pt"/></svg>阵列特征</div>
        <div class="si"><svg class="s16"><use href="#su"/></svg>减去<i class="car ml8"></i></div>
        <div class="si"><svg class="s16"><use href="#sh"/></svg>抽壳</div>
      </div>
      <div class="bb w46"><span class="bi"><svg class="b30"><use href="#eb"/></svg></span><span class="bl">边倒圆</span><i class="car"></i></div>
      <div class="sc w66 ">
        <div class="si"><svg class="s16"><use href="#cf"/></svg>倒斜角</div>
        <div class="si"><svg class="s16"><use href="#tr"/></svg>修剪体</div>
        <div class="si"><svg class="s16"><use href="#dr"/></svg>拔模</div>
      </div>
      <div class="bb w38 mbox"><span class="box"><svg class="m20"><use href="#mo"/></svg></span><span class="bl">更多</span><i class="car"></i></div>
    </div>
    <div class="foot"><span>特征</span><i class="car"></i></div>
  </div>

  <div class="grp g3">
    <div class="body">
      <div class="bb w44"><span class="bi"><svg class="b30"><use href="#mf"/></svg></span><span class="bl">移动面</span></div>
      <div class="sc w79">
        <div class="si"><svg class="s16"><use href="#ofs"/></svg>偏置区域</div>
        <div class="si"><svg class="s16"><use href="#rp"/></svg>替换面</div>
        <div class="si"><svg class="s16"><use href="#de"/></svg>删除面</div>
      </div>
      <div class="bb w38 mbox"><span class="box"><svg class="m20"><use href="#rf"/></svg></span><span class="bl">更多</span><i class="car"></i></div>
    </div>
    <div class="foot"><span>同步建模</span><i class="car"></i></div>
  </div>

  <div class="grp g4">
    <div class="tools">
      <div class="trow"><b class="tc"><svg><use href="#t1"/></svg></b><b class="tc"><svg><use href="#t2"/></svg></b><b class="tc"><svg><use href="#t3"/></svg></b><i class="ts"></i><b class="tc"><svg><use href="#t4"/></svg></b></div>
      <div class="trow"><b class="tc"><svg><use href="#t5"/></svg></b><b class="tc"><svg><use href="#t6"/></svg></b><b class="tc"><svg><use href="#t7"/></svg></b><i class="ts"></i><b class="tc"><svg><use href="#t8"/></svg></b></div>
    </div>
    <div class="foot"><span>标准化工具 - G...</span><i class="car"></i></div>
  </div>

  <div class="grp g5">
    <div class="tools">
      <div class="trow"><b class="tc"><svg><use href="#t9"/></svg></b><b class="tc"><svg><use href="#t10"/></svg></b></div>
      <div class="trow"><b class="tc"><svg><use href="#t11"/></svg></b></div>
    </div>
    <div class="foot"><span>齿轮...</span><i class="car"></i></div>
  </div>

  <div class="grp g6">
    <div class="tools">
      <div class="trow"><b class="tc"><svg><use href="#t12"/></svg></b><b class="tc"><svg><use href="#t13"/></svg></b></div>
      <div class="trow"><b class="tc"><svg><use href="#t14"/></svg></b><i class="ts"></i><b class="tc"><svg><use href="#t15"/></svg></b></div>
    </div>
    <div class="foot"><span>弹簧...</span><i class="car"></i></div>
  </div>

  <div class="grp g7">
    <div class="tools">
      <div class="trow"><b class="tc"><svg><use href="#t16"/></svg></b><b class="tc"><svg><use href="#t17"/></svg></b></div>
      <div class="trow"><b class="tc"><svg><use href="#t18"/></svg></b><b class="tc"><svg><use href="#t19"/></svg></b></div>
    </div>
    <div class="foot"><span>加工...</span><i class="car"></i></div>
  </div>

  <div class="grp g8">
    <div class="tools">
      <div class="trow"><b class="tc"><svg><use href="#t20"/></svg></b><b class="tc"><svg><use href="#t21"/></svg></b><b class="tc"><svg><use href="#t22"/></svg></b><b class="tc"><svg><use href="#t23"/></svg></b></div>
      <div class="trow"><b class="tc"><svg><use href="#t24"/></svg></b><b class="tc"><svg><use href="#t25"/></svg></b><i class="ts"></i><b class="tc"><svg><use href="#t26"/></svg></b></div>
    </div>
    <div class="foot"><span>建模工具 - G...</span><i class="car"></i></div>
  </div>

  <div class="grp g9">
    <div class="tools">
      <div class="trow"><b class="tc"><svg><use href="#t27"/></svg></b></div>
      <div class="trow"><b class="tc"><svg><use href="#t27"/></svg></b></div>
    </div>
    <div class="foot"><span>?..</span><i class="car"></i></div>
  </div>

  <div class="grp g10">
    <div class="tools">
      <div class="trow"><b class="tc"><svg><use href="#d1"/></svg></b><i class="ts"></i><b class="tc"><svg><use href="#d2"/></svg></b><b class="tc"><svg><use href="#d3"/></svg></b><b class="tc"><svg><use href="#d4"/></svg></b><b class="tc"><svg><use href="#d4"/></svg></b><b class="tc"><svg><use href="#d4"/></svg></b><b class="tc"><svg><use href="#d5"/></svg></b><b class="tc"><svg><use href="#d6"/></svg></b><b class="tc"><svg><use href="#d7"/></svg></b><b class="tc"><svg><use href="#d8"/></svg></b><b class="tc"><svg><use href="#d8"/></svg></b><b class="tc"><svg><use href="#d8"/></svg></b></div>
      <div class="trow"><b class="tc"><svg><use href="#d9"/></svg></b><b class="tc"><svg><use href="#d10"/></svg></b><i class="ts"></i><b class="tc"><svg><use href="#d11"/></svg></b><b class="tc"><svg><use href="#d12"/></svg></b><b class="tc"><svg><use href="#d13"/></svg></b></div>
    </div>
    <div class="foot"><span>尺寸快速格式化工具 - GC工具箱</span><i class="car"></i></div>
  </div>

  <div class="grp g11">
    <div class="body">
      <div class="bb w42"><span class="bi"><svg class="b30"><use href="#sf"/></svg></span><span class="bl">曲面</span><i class="car"></i></div>
    </div>
  </div>

  <div class="grp g12">
    <div class="body">
      <div class="bb w50"><span class="bi"><svg class="b30"><use href="#pr"/></svg></span><span class="bl off">处理装配</span></div>
      <div class="bb w42"><span class="bi"><svg class="b30"><use href="#ad"/></svg></span><span class="bl">添加</span><i class="car"></i></div>
      <div class="sc w80 pl4">
        <div class="si"><svg class="s16"><use href="#co"/></svg>装配约束</div>
        <div class="si"><svg class="s16"><use href="#mc"/></svg>移动组件</div>
        <div class="si"><svg class="s16"><use href="#ac"/></svg>阵列组件</div>
      </div>
    </div>
    <div class="foot"><span>装配</span><i class="car"></i></div>
  </div>
  <div class="ribend"><i class="car"></i></div>
</section>

<section class="selbar">
  <svg class="s16 menuic"><use href="#mn"/></svg><span class="menutxt">菜单(<u>M</u>)</span><i class="car smi"></i><i class="vsep"></i>
  <div class="combo c1"><span>无选择过滤器</span><i class="car big"></i></div>
  <div class="combo c2"><span>整个装配</span><i class="car big"></i></div>
  <span class="tb"><svg><use href="#a1"/></svg></span>
  <span class="tb"><svg><use href="#a2"/></svg></span>
  <span class="tb"><svg><use href="#a3"/></svg></span><i class="car tbc"></i>
  <span class="tb"><svg><use href="#a4"/></svg></span>
  <span class="tb"><svg><use href="#a5"/></svg></span>
  <span class="tb"><svg><use href="#a6"/></svg></span>
  <span class="tb"><svg><use href="#a7"/></svg></span><i class="car tbc"></i>
  <span class="tb"><svg><use href="#a8"/></svg></span>
  <span class="tb"><svg><use href="#a9"/></svg></span>
  <span class="tb on ml3"><svg><use href="#a11"/></svg></span>
  <span class="tb on"><svg><use href="#a12"/></svg></span>
  <span class="tb on"><svg><use href="#a13"/></svg></span>
  <span class="tb"><svg><use href="#a14"/></svg></span>
  <span class="tb on"><svg><use href="#a15"/></svg></span>
  <span class="tb on"><svg><use href="#a16"/></svg></span>
  <span class="tb"><svg><use href="#a17"/></svg></span>
  <span class="tb on"><svg><use href="#a18"/></svg></span>
  <span class="tb"><svg><use href="#a19"/></svg></span>
  <span class="tb"><svg><use href="#a20"/></svg></span>
  <span class="tb on"><svg><use href="#a13"/></svg></span>
  <span class="tb"><svg><use href="#a21"/></svg></span>
  <span class="tb"><svg><use href="#a22"/></svg></span>
  <span class="tb"><svg><use href="#a23"/></svg></span>
  <i class="vsep vs2"></i>
  <span class="tb"><svg><use href="#b1"/></svg></span>
  <span class="tb"><svg><use href="#b2"/></svg></span>
  <span class="tb"><svg><use href="#b3"/></svg></span>
  <span class="tb"><svg><use href="#b4"/></svg></span>
  <span class="tb"><svg><use href="#b5"/></svg></span>
  <span class="tb"><svg><use href="#b6"/></svg></span><i class="car tbc2"></i>
  <span class="tb"><svg><use href="#b7"/></svg></span><i class="car tbc2"></i>
  <span class="tb"><svg><use href="#b8"/></svg></span><i class="car tbc2"></i>
  <span class="tb"><svg><use href="#b9"/></svg></span><i class="car tbc2"></i>
  <i class="vsep vs3"></i>
  <i class="car selend"></i>
</section>

<main class="main">
  <aside class="rail">
    <span class="ri first"><svg class="r16"><use href="#cog"/></svg></span>
    <span class="ri mt16"><svg class="r24"><use href="#r2"/></svg></span>
    <span class="ri"><svg class="r24"><use href="#r3"/></svg></span>
    <span class="ri act"><svg class="r24"><use href="#r4"/></svg></span>
    <span class="ri"><svg class="r24"><use href="#r5"/></svg></span>
    <span class="ri"><svg class="r24"><use href="#r6"/></svg></span>
    <span class="ri mt15"><svg class="r26"><use href="#r7"/></svg></span>
    <span class="ri mt10"><svg class="r24"><use href="#r8"/></svg></span>
    <span class="ri mt12"><svg class="r24"><use href="#r9"/></svg></span>
    <span class="ri mt1"><svg class="r24"><use href="#r10"/></svg></span>
    <span class="ri"><svg class="r24"><use href="#r11"/></svg></span>
    <span class="ri"><svg class="r24"><use href="#r12"/></svg></span>
  </aside>

  <section class="navpanel">
    <div class="navtitle"><span>部件导航器</span><svg class="mxi"><use href="#mx"/></svg></div>
    <div class="tree">
      <div class="thead"><span class="th c1h">名称<i class="sort"></i></span><span class="th c2h">最新</span><span class="th c3h">附</span></div>
      <div class="tbody">
        <i class="vl vl1"></i><i class="vl vl2"></i>
        <div class="row"><i class="pm">+</i><i class="hl"></i><svg class="ti"><use href="#n1"/></svg>模型视图</div>
        <div class="row"><i class="pm">+</i><svg class="ck0"><use href="#ck"/></svg><svg class="ti"><use href="#n2"/></svg>摄像机</div>
        <div class="row"><i class="nopm"></i><i class="hl"></i><svg class="ti"><use href="#n3"/></svg>用户表达式</div>
        <div class="row"><i class="pm">−</i><i class="hl"></i><svg class="ti"><use href="#n4"/></svg>模型历史记录</div>
        <div class="row sub"><i class="hl2"></i><svg class="cb"><use href="#cb"/></svg><svg class="ti"><use href="#n5"/></svg><span class="nm">基准坐标系 (0)</span><svg class="okc"><use href="#ck"/></svg></div>
        <div class="row sub"><i class="hl2"></i><svg class="cb"><use href="#cb"/></svg><svg class="ti"><use href="#n6"/></svg><span class="nm">块 (1)</span><svg class="okc"><use href="#ck"/></svg></div>
        <div class="row sub"><i class="hl2"></i><svg class="cb"><use href="#cb"/></svg><svg class="ti"><use href="#n7"/></svg><span class="nm">简单孔 (2)</span><svg class="okc"><use href="#ck"/></svg></div>
        <div class="row sub"><i class="hl2"></i><svg class="cb"><use href="#cb"/></svg><svg class="ti"><use href="#ex"/></svg><span class="nm">拉伸 (4)</span><svg class="okc"><use href="#ck"/></svg></div>
        <div class="row sub"><i class="hl2"></i><svg class="cb"><use href="#cb"/></svg><svg class="ti"><use href="#su"/></svg><span class="nm">减去 (5)</span><svg class="okc"><use href="#ck"/></svg></div>
        <div class="row sub"><i class="hl2"></i><svg class="cb"><use href="#cb"/></svg><svg class="ti"><use href="#sh"/></svg><span class="nm">壳 (6)</span><svg class="okc"><use href="#ck"/></svg></div>
        <div class="row sub"><i class="hl2"></i><svg class="cb"><use href="#cb"/></svg><svg class="ti"><use href="#eb"/></svg><span class="nm strong">边倒圆 (7)</span><svg class="okc"><use href="#ck"/></svg></div>
      </div>
      <div class="hscroll"><i class="arr l"></i><div class="track"><div class="thumb"></div></div><i class="arr r"></i></div>
    </div>
    <div class="treeend"></div>
    <div class="acc"><span>相关性</span><svg class="chev" viewBox="0 0 12 10"><path d="M1 1.500l5 6 5-6" fill="none" stroke="#0a708f" stroke-width="2"/></svg></div>
    <div class="acc"><span>细节</span><svg class="chev" viewBox="0 0 12 10"><path d="M1 1.500l5 6 5-6" fill="none" stroke="#0a708f" stroke-width="2"/></svg></div>
    <div class="acc"><span>预览</span><svg class="chev" viewBox="0 0 12 10"><path d="M1 1.500l5 6 5-6" fill="none" stroke="#0a708f" stroke-width="2"/></svg></div>
  </section>

  <section class="work">
    <div class="tabs">
      <div class="ft"><svg class="fi" viewBox="0 0 14 14"><path d="M1 3l4-2 2 1v6l6-3v5l-5 3-7-3z" fill="#2a5fe0" stroke="#123aa0" stroke-width=".6"/></svg><span>_model1.prt</span><svg class="fe" viewBox="0 0 12 12"><path d="M2 2h7v8H2z" fill="none" stroke="#333" stroke-width="1.200"/><path d="M5 7l4-5 1.500 1-4 5z" fill="#333"/></svg></div>
      <div class="ft on"><svg class="fi" viewBox="0 0 14 14"><path d="M1 3l4-2 2 1v6l6-3v5l-5 3-7-3z" fill="#2a5fe0" stroke="#dfe8ff" stroke-width=".6"/></svg><span>_model2.prt</span><svg class="fe" viewBox="0 0 12 12"><path d="M2 2h7v8H2z" fill="none" stroke="#fff" stroke-width="1.200"/><path d="M5 7l4-5 1.500 1-4 5z" fill="#fff"/></svg><svg class="fx" viewBox="0 0 10 10"><path d="M1.500 1.500l7 7M8.500 1.500l-7 7" stroke="#fff" stroke-width="2"/></svg></div>
    </div>
    <div class="canvas">
      <svg class="scene" viewBox="365 203 1555 815" xmlns="http://www.w3.org/2000/svg">
        <!-- silhouette base closes the seams between the faces -->
        <path d="M1012 522L1027 517L1533 735L1538 757L1534 768L1475 870L1465 874L1440 868L967 662L950 654L944 643L957 612L971 595z" fill="#e69600"/>
        <path d="M1012 522C1016 519 1022 518 1027 517L977 593L971 595z" fill="#ffa800"/>
        <path d="M1027 517C1050 510 1080 510 1105 510C1150 510 1185 516 1216 523C1255 533 1290 547 1318 560C1355 578 1390 600 1420 623C1455 650 1480 672 1501 697C1515 712 1525 725 1533 735" fill="none" stroke="#ff9c00" stroke-width="2.500"/>
        <!-- top face -->
        <path d="M1027 517C1050 510 1080 510 1105 510C1150 510 1185 516 1216 523C1255 533 1290 547 1318 560C1355 578 1390 600 1420 623C1455 650 1480 672 1501 697C1515 712 1525 725 1533 735L1483 813C1455 775 1420 735 1379 703C1355 682 1320 660 1277 640C1220 615 1155 597 1093 590C1050 586 1010 587 977 593z" fill="url(#mTop)"/>
        <!-- front fillet -->
        <path d="M977 593C1010 587 1050 586 1093 590C1155 597 1220 615 1277 640C1320 660 1355 682 1379 703C1420 735 1455 775 1483 813L1454 837C1438 815 1420 797 1399 777C1382 760 1362 744 1338 727C1305 703 1272 683 1236 667C1205 652 1170 642 1134 633C1110 628 1080 626 1052 625C1030 624 1000 626 978 630z" fill="#e39200"/>
        <g clip-path="url(#filletClip)">
          <path d="M970 598C1040 592 1120 600 1200 625C1270 648 1335 690 1385 732C1420 764 1450 795 1475 828" fill="none" stroke="url(#mHi)" stroke-width="15" filter="url(#blur6)"/>
          <path d="M970 596C1040 590 1120 598 1200 623C1270 646 1335 688 1385 728" fill="none" stroke="#ffbe00" stroke-width="6" filter="url(#blur6)"/>
        </g>
        <!-- front flat face -->
        <path d="M978 630C1000 626 1030 624 1052 625C1080 626 1110 628 1134 633C1170 642 1205 652 1236 667C1272 683 1305 703 1338 727C1362 744 1382 760 1399 777C1420 797 1438 815 1454 837L1440 868L967 662z" fill="#c07300"/>
        <!-- left side + corner -->
        <path d="M957 612C960 622 970 628 978 630L967 662L950 654C946 651 943 647 944 643z" fill="url(#mLeft)"/>
        <path d="M977 593C965 596 958 603 957 612C960 622 970 628 978 630C975 615 975 605 977 593z" fill="url(#mBall)"/>
        <!-- right side + corner -->
        <path d="M1533 735C1537 742 1539 750 1538 757L1489 830L1483 813z" fill="#ffa000"/>
        <path d="M1538 757L1534 768L1475 870C1472 873 1468 874 1465 874C1458 874 1450 873 1440 868L1454 837C1460 841 1468 843 1477 842C1482 842 1486 838 1489 830z" fill="url(#mSide)"/>
        <path d="M1483 813C1488 820 1490 825 1489 830C1486 838 1482 842 1477 842C1468 843 1460 841 1454 837z" fill="url(#mBall)"/>
        <!-- edges -->
        <g fill="none" stroke="#3a4050" stroke-width=".7">
          <path d="M1027 517C1050 510 1080 510 1105 510C1150 510 1185 516 1216 523C1255 533 1290 547 1318 560C1355 578 1390 600 1420 623C1455 650 1480 672 1501 697C1515 712 1525 725 1533 735"/>
          <path d="M1027 517L977 593C1010 587 1050 586 1093 590C1155 597 1220 615 1277 640C1320 660 1355 682 1379 703C1420 735 1455 775 1483 813L1533 735"/>
          <path d="M978 630C1000 626 1030 624 1052 625C1080 626 1110 628 1134 633C1170 642 1205 652 1236 667C1272 683 1305 703 1338 727C1362 744 1382 760 1399 777C1420 797 1438 815 1454 837"/>
          <path d="M977 593C975 605 975 615 978 630L967 662"/>
          <path d="M1483 813C1488 820 1490 825 1489 830C1486 838 1482 842 1477 842C1468 843 1460 841 1454 837L1440 868"/>
        </g>
        <path d="M967 662L1440 868" fill="none" stroke="#7a4a00" stroke-width=".8"/>
        <!-- holes -->
        <use href="#hole" x="-32" y="-12" transform="translate(1156.500 535.500) rotate(3)"/>
        <use href="#hole" x="-32" y="-12" transform="translate(1131 574) rotate(3)"/>
        <use href="#hole" x="-32" y="-12" transform="translate(1296 575) rotate(22) scale(.97 1.050)"/>
        <use href="#hole" x="-32" y="-12" transform="translate(1272 613) rotate(22) scale(.97 1.050)"/>
        <use href="#hole" x="-32" y="-12" transform="translate(1421 651) rotate(40) scale(1 1.050)"/>
        <use href="#hole" x="-32" y="-12" transform="translate(1396 689) rotate(40) scale(1 1.050)"/>
        <!-- WCS -->
        <g fill="none" stroke="#1a1aee" stroke-width=".9">
          <path d="M1050.500 431.700L1171 483"/>
          <path d="M1050.500 431.700L1014 527M1045 437L1014 510M1040 455L1097 479L1111.500 458L1089 512M1028 489L1089 512"/>
          <path d="M1045 431.700h11M1050.500 426v11" stroke-width="2"/>
        </g>
        <path d="M1158 475L1172 483L1157 483z" fill="#1a1aee"/>
        <circle cx="1025" cy="470" r="2.800" fill="#1a1aee"/>
        <path d="M1084 511l7 1-2 5z" fill="none" stroke="#ddd" stroke-width=".8"/>
        <text class="ax blue" x="1175" y="492">X</text>
        <text class="ax blue" x="1018" y="482">Y</text>
        <path d="M1008 530l5 3-7 15z" fill="#bbb"/>
        <text class="ax grey" x="997" y="555">Z</text>
        <!-- triad -->
        <path d="M430 953L453 963L439 991L416 981z" fill="#dcdcdc" stroke="#b0b0b0"/>
        <path d="M425.500 962L448.500 972M420.500 972L444 982" stroke="#aaa" fill="none"/>
        <path d="M430 953L416 981" stroke="#aab8e0" stroke-width="3"/>
        <path d="M431 950L461 963L460 966L430 953z" fill="#d83030"/>
        <path d="M458 961L469 967L456 966z" fill="#d83030"/>
        <path d="M428 952L422 962" stroke="#2c9a38" stroke-width="3"/>
        <path d="M418 959L425 964L420 966z" fill="#2c9a38"/>
        <path d="M416 981L415 986" stroke="#2030d0" stroke-width="2"/>
        <circle cx="429" cy="949" r="3" fill="#f2f2f2" stroke="#ccc"/>
        <text class="ax red" x="470" y="975">X</text>
        <text class="ax green" x="416" y="973">Y</text>
        <text class="ax zblue" x="409" y="998">Z</text>
      </svg>
    </div>
  </section>
</main>

<footer class="status"></footer>
<div class="taskbar"><i class="taskitem"></i></div>

<div class="ime">
  <div class="logo"><span>S</span></div>
  <div class="imebar">
    <span class="imet">英</span>
    <svg class="imei w12" viewBox="0 0 12 12"><circle cx="3" cy="4" r="2" fill="#1a6fe0"/><path d="M10 5c1 3-1 5-3 6 1-1 1-3 0-5z" fill="#1a6fe0"/></svg>
    <svg class="imei" viewBox="0 0 14 14"><rect x="3.500" width="7" height="10" rx="3.500" fill="#1a6fe0"/><path d="M2 6a5 5 0 0010 0M7 11v3" fill="none" stroke="#1a6fe0"/></svg>
    <svg class="imei" viewBox="0 0 14 14"><rect y="2" width="14" height="10" rx="1" fill="#1a6fe0"/><path d="M2 5h10M2 7.500h10" stroke="#fff" stroke-dasharray="1 1"/><path d="M4 10h6" stroke="#fff"/></svg>
    <svg class="imei" viewBox="0 0 14 14"><path d="M0 3l4-2c1 2 5 2 6 0l4 2-1 4-2-.5V13H3V6.500L1 7z" fill="#1a6fe0"/></svg>
    <svg class="imei" viewBox="0 0 14 14"><rect width="6" height="6" rx="1.500" fill="#c8b0f0"/><rect x="8" width="6" height="6" rx="1.500" fill="#9a88e0"/><rect y="8" width="6" height="6" rx="1.500" fill="#e0b0c8"/><rect x="8" y="8" width="6" height="6" rx="1.500" fill="#a8a0e8"/></svg>
  </div>
  <div class="wm">UG爱好者论坛@清衣客</div>
  <div class="clock">10:28</div>
</div>
</body>
</html>
```

FILE: styles.css
```css
*{box-sizing:border-box}
html,body{margin:0;padding:0}
body{width:1920px;height:1048px;overflow:hidden;display:flex;flex-direction:column;background:#fff;color:#222;font-family:"Noto Sans CJK SC","Noto Sans",sans-serif;font-size:11px;position:relative}
i,b{font-style:normal;font-weight:400}
svg{display:block;flex:none}
.sprite{width:0;height:0;overflow:hidden}
.car{display:inline-block;width:0;height:0;border-left:3.5px solid transparent;border-right:3.5px solid transparent;border-top:4px solid #222;flex:none}

/* title bar */
.titlebar{height:26px;display:grid;grid-template-columns:1062px auto 1fr;align-items:center;flex:none}
.qat{display:flex;align-items:center;height:26px}
.nx{font-family:"Liberation Sans",sans-serif;font-weight:700;font-size:22px;color:#8b9dac;margin-left:3px;width:33px;letter-spacing:.5px}
.qsep{width:1px;height:17px;background:#d0d0d0;margin:0 6px}
.q16{width:16px;height:16px}
.q14{width:14px;height:14px}
.ml10{margin-left:3px}
.q14.ml10{margin-left:10px}
.ml4{margin-left:4px}
.ml8{margin-left:8px}
.ml3{margin-left:3px}
.mi{margin:0 4px 0 7px}
.mi3{margin:0 -2px 0 6px}
.qmore{margin-left:3px}
.qt{margin-left:4px;font-size:11px;line-height:14px}
.apptitle{font-size:13px;color:#222}
.winbtns{display:flex;align-items:center;justify-content:flex-end;height:26px}
.siemens{font-family:"Liberation Sans",sans-serif;font-weight:700;font-size:13px;letter-spacing:.3px;color:#009999;margin-right:25px}
.wb{width:14px;height:14px}
.wb1{margin-right:10px}
.wb2{margin-right:16px}

/* tab row */
.menubar{height:28px;background:#dcdcdc;display:flex;align-items:stretch;flex:none;font-size:13px}
.filetab{width:81px;background:#5ba0b8;color:#fff;display:flex;align-items:center;justify-content:center}
.mt{padding:0 13px;display:flex;align-items:center;white-space:nowrap;color:#222}
.mt.first{margin-left:2px}
.mt.star{width:107px}
.mt.cur{background:#fff;color:#0a7396;border-top:1px solid #c4c4c4;margin-top:1px}
.menuright{margin-left:auto;display:flex;align-items:center}
.search{width:125px;height:20px;background:#fff;border:1px solid #aaa;display:flex;align-items:center;justify-content:space-between;padding:0 2px;color:#aaa;font-size:11px}
.searchic{width:15px;height:15px}
.mr1{width:16px;height:16px;margin-left:11px}
.mr2{width:12px;height:9px;margin-left:9px}
.mr3{width:14px;height:16px;margin:0 8px 0 18px}

/* ribbon */
.ribbon{height:95px;flex:none;display:flex;padding-top:5px;border-bottom:2px solid #dcdcdc;align-items:flex-start;line-height:14px}
.grp{height:85px;border-right:1px solid #d8d8d8;display:flex;flex-direction:column;flex:none}
.g1{width:178px}.g2{width:369px}.g3{width:171px}.g4{width:104px}.g5{width:53px}.g6{width:57px}.g7{width:52px}.g8{width:98px}.g9{width:29px}.g10{width:289px}.g11{width:43px}.g12{width:181px}
.body{height:71px;display:flex;align-items:flex-start}
.g2 .body{padding-left:9px}
.g3 .body{padding-left:6px}
.g12 .body{padding-left:9px}
.tools{height:71px;padding-left:4px}
.trow{height:32px;display:flex;align-items:center}
.tc{width:23px;height:20px;display:flex;align-items:center;justify-content:center}
.tc svg{width:18px;height:18px}
.ts{width:1px;height:24px;background:#d8d8d8;margin:0 2px}
.foot{height:14px;padding-top:2px;display:flex;align-items:center;color:#0a7396;font-size:11px;white-space:nowrap;line-height:12px}
.foot .car{margin-left:auto;margin-right:8px}
.g1 .foot{padding-left:58px}.g2 .foot{padding-left:164px}.g3 .foot{padding-left:55px}.g4 .foot{padding-left:2px}.g5 .foot{padding-left:3px}.g6 .foot{padding-left:4px}.g7 .foot{padding-left:2px}.g8 .foot{padding-left:5px}.g9 .foot{padding-left:2px}.g10 .foot{padding-left:57px}.g12 .foot{padding-left:70px}
.bb{display:flex;flex-direction:column;align-items:center;flex:none;white-space:nowrap}
.w57{width:57px}.w50{width:50px}.w46{width:46px}.w44{width:44px}.w42{width:42px}.w38{width:38px}
.w66{width:66px}.w68{width:68px}.w79{width:79px}.w80{width:80px}
.bi{height:36px;display:block;padding-top:1px}
.b30{width:30px;height:30px}
.bl{height:16px;line-height:16px;margin-bottom:5px;color:#222}
.bl.off{color:#bdbdbd}
.box{width:37px;height:34px;border:1px solid #ddd;border-radius:4px;display:flex;align-items:center;justify-content:center;margin:-1px 0 3px}
.m20{width:20px;height:20px}
.mbox{margin-left:1px}
.sc{flex:none;margin-top:-4px}
.sc.ml6{margin-left:6px}
.pl4{padding-left:4px}
.pl4 .si{gap:3px}
.si{height:22px;display:flex;align-items:center;gap:5px;padding-left:2px;white-space:nowrap}
.s16{width:16px;height:16px}
.car.ml8{margin-left:4px}
.gallery{width:99px;height:65px;border:1px solid #ddd;display:grid;grid-template-columns:repeat(3,1fr);grid-template-rows:repeat(2,1fr);justify-items:center;align-items:center;flex:none;padding:3px}
.g26{width:26px;height:26px}
.gscroll{width:21px;height:65px;display:flex;flex-direction:column;align-items:center;justify-content:space-between;padding:8px 0;flex:none}
.tri-up{width:0;height:0;border-left:3.500px solid transparent;border-right:3.500px solid transparent;border-bottom:4px solid #ccc}
.more{display:block;width:7px;height:7px;border-top:1px solid #222;flex:none}
.more::after{content:"";display:block;width:0;height:0;margin-top:2px;border-left:3.500px solid transparent;border-right:3.500px solid transparent;border-top:4px solid #222}
.ribend{margin-left:auto;height:84px;display:flex;align-items:flex-end;padding:0 4px 4px 0}

/* selection bar */
.selbar{height:31px;flex:none;display:flex;align-items:center;border-bottom:1px solid #999;padding-bottom:1px}
.menuic{margin-left:10px}
.menutxt{margin-left:5px;width:40px;white-space:nowrap}
.smi{margin:0 6px 0 3px}
.vsep{width:1px;height:22px;background:#d8d8d8;flex:none}
.combo{height:20px;border:1px solid #999;display:flex;align-items:center;justify-content:space-between;padding:0 6px 0 3px;background:#fff;flex:none}
.combo.c1{width:133px;margin-left:11px}
.combo.c2{width:140px;margin-left:9px}
.car.big{border-left-width:4px;border-right-width:4px;border-top-width:5px}
.c2 + .tb{margin-left:3px}
.tb{width:25px;height:22px;display:flex;align-items:center;justify-content:center;flex:none;border:1px solid transparent}
.tb svg{width:18px;height:18px}
.tb.on{background:#cde6ec;border:1px solid #b0d8e0}
.tbc{margin:0 1.500px}
.tbc2{margin:0 2.500px}
.vs2{margin:0 7px 0 5px}
.vs3{margin-left:6px}
.selend{margin-left:auto;margin-right:4px;margin-top:8px}

/* main */
.main{flex:none;height:838px;display:flex}
.rail{width:33px;background:#dcdcdc;border-right:1px solid #999;display:flex;flex-direction:column;flex:none}
.ri{height:42px;display:flex;align-items:center;justify-content:center;flex:none}
.ri.first{height:26px}
.mt16{margin-top:16px}.mt15{margin-top:15px}.mt10{margin-top:10px}.mt12{margin-top:12px}.mt1{margin-top:1px}
.ri.act{height:45px;margin:-1.500px -1px -1.500px 2px;background:#fff;border:1px solid #c4c4c4;border-right:0;border-radius:2px 0 0 2px}
.r16{width:16px;height:16px}
.r24{width:24px;height:24px}
.r26{width:28px;height:28px}

.navpanel{width:331px;flex:none;border-right:1px solid #999;background:#fff;display:flex;flex-direction:column;padding:0 9px 0 5px}
.navtitle{height:28px;display:flex;align-items:center;justify-content:space-between;font-size:12px;padding:0 5px 0 4px;flex:none}
.mxi{width:12px;height:12px}
.tree{width:316px;height:728px;border:1px solid #ddd;padding:1px;flex:none;display:flex;flex-direction:column;font-size:12px}
.thead{height:20px;display:grid;grid-template-columns:199px 100px 1fr;background:#f0f0f0;border-bottom:1px solid #ddd;flex:none;line-height:19px;overflow:hidden}
.th{padding-left:6px;border-right:1px solid #ddd;color:#333;white-space:nowrap}
.th:last-child{border-right:0}
.c1h{display:flex;align-items:center}
.sort{width:0;height:0;border-left:5px solid transparent;border-right:5px solid transparent;border-bottom:5px solid #222;margin-left:17px}
.tbody{flex:1;position:relative;overflow:hidden;
background:
 linear-gradient(#ececec,#ececec) 198px 0/1px 100% no-repeat,
 linear-gradient(#ececec,#ececec) 298px 0/1px 100% no-repeat,
 repeating-linear-gradient(#fff 0 19px,#ececec 19px 20px,#f9f9f9 20px 39px,#ececec 39px 40px)}
.row{height:20px;display:flex;align-items:center;white-space:nowrap;line-height:20px;position:relative;padding-left:6px}
.pm{width:8px;height:8px;border:1px solid #bbb;background:#fff;font-size:9px;line-height:6px;text-align:center;color:#111;flex:none;font-family:"Liberation Sans",sans-serif}
.nopm{width:8px;flex:none}
.hl{width:5px;border-top:1px dotted #999;flex:none}
.ti{width:16px;height:16px;margin:0 2px 0 0;flex:none}
.ck0{width:14px;height:14px;margin-left:7px;flex:none}
.sub{padding-left:28px}
.hl2{width:9px;border-top:1px dotted #999;flex:none}
.cb{width:14px;height:14px;margin-left:3px;flex:none}
.sub .ti{margin:0 2px 0 1px}
.nm{width:132px;flex:none}
.strong{font-weight:700}
.okc{width:14px;height:14px;position:absolute;left:205px;top:3px}
.vl{position:absolute;border-left:1px dotted #999;z-index:1}
.vl1{left:10px;top:14px;height:50px}
.vl2{left:28px;top:72px;height:142px}
.hscroll{height:16px;background:#f2f2f2;display:flex;align-items:center;margin-top:auto;flex:none;padding:0 1px}
.arr{width:6px;height:6px;border-left:2px solid #666;border-bottom:2px solid #666;flex:none}
.arr.l{transform:rotate(45deg);margin:0 6px}
.arr.r{transform:rotate(225deg);margin:0 6px}
.track{flex:1;height:16px}
.thumb{height:16px;width:216px;background:#c8c8c8;margin-left:-1px}
.treeend{height:4px;border:1px solid #aaa;background:#eee;width:316px;flex:none}
.acc{height:24px;width:316px;border-bottom:2px solid #ccc;display:flex;align-items:center;justify-content:space-between;padding:2px 6px 0 8px;color:#1080a8;font-size:14px;flex:none;line-height:20px}
.chev{width:12px;height:10px;margin-top:-4px}

.work{flex:1;display:flex;flex-direction:column;min-width:0}
.tabs{height:23px;display:flex;border-bottom:1px solid #5ba0b8;flex:none}
.ft{height:22px;width:133px;display:flex;align-items:center;padding-left:7px;font-family:"Liberation Sans",sans-serif;font-size:13px;color:#222}
.ft.on{background:#5ba0b8;color:#fff;width:132px}
.fi{width:14px;height:14px;margin-right:6px}
.fe{width:12px;height:12px;margin-left:4px}
.fx{width:10px;height:10px;margin-left:5px}
.canvas{flex:1;background:linear-gradient(#afafaf 0,#c6c7c9 28%,#dfe0e2 62%,#e9eaeb 100%);position:relative;overflow:hidden}
.scene{width:1555px;height:815px;display:block}
.ax{font-family:"Liberation Sans",sans-serif;font-size:12px}
.blue{fill:#2a2aee}.grey{fill:#d4d4d4}.red{fill:#d83a3a}.green{fill:#7ab88a}.zblue{fill:#3a5af0}

/* bottom */
.status{height:22px;flex:none;border-top:1px solid #aaa;background:#fff}
.taskbar{height:8px;flex:none;background:#22363f;display:flex}
.taskitem{width:48px;margin-left:51px;background:#4f656f}

/* floating IME bar */
.ime{position:absolute;left:1740px;top:1010px;width:180px;height:38px}
.logo{position:absolute;left:1px;top:1px;width:28px;height:28px;background:#f2571a;border-radius:3px;transform:rotate(-14deg);display:flex;align-items:center;justify-content:center;color:#fff;font:700 25px/1 "Liberation Sans",sans-serif;z-index:2}
.imebar{position:absolute;left:28px;top:4px;width:144px;height:26px;background:#fff;border:1px solid #d0e4f5;display:flex;align-items:center;padding:0 0 0 8px;gap:10px}
.imet{color:#1a6fe0;font-weight:700;font-size:14px;width:14px;margin-right:2px}
.imei{width:15px;height:15px}
.imei.w12{width:12px;margin-right:2px}
.wm{position:absolute;left:23px;top:19px;font-size:13px;letter-spacing:1.6px;color:#444;white-space:nowrap;line-height:14px;font-family:"Noto Sans CJK SC",sans-serif;text-shadow:0 0 2px #fff}
.clock{position:absolute;left:76px;top:32px;color:#fff;font-size:11px;line-height:14px;font-family:"Liberation Sans",sans-serif}
```
